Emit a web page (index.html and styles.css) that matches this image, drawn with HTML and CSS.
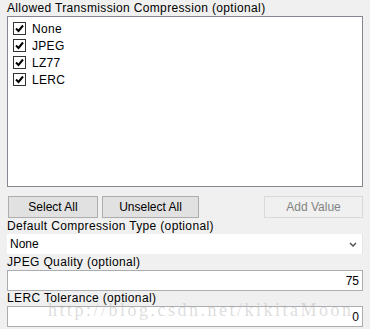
FILE: index.html
```html
<!DOCTYPE html>
<html>
<head>
    <title>Transmission Compression</title>
    <link rel="stylesheet" href="styles.css">
</head>
<body>
    <div class="panel">
        <div class="label">Allowed Transmission Compression (optional)</div>
        <div class="listbox">
            <div class="item"><span class="check"></span>None</div>
            <div class="item"><span class="check"></span>JPEG</div>
            <div class="item"><span class="check"></span>LZ77</div>
            <div class="item"><span class="check"></span>LERC</div>
        </div>

        <div class="buttons">
            <button class="btn">Select All</button>
            <button class="btn btn-wide">Unselect All</button>
            <button class="btn btn-add" disabled>Add Value</button>
        </div>

        <div class="label">Default Compression Type (optional)</div>
        <div class="combo">
            <span>None</span>
            <svg class="arrow" width="8" height="5" viewBox="0 0 8 5"><path d="M1 1 L4 4 L7 1" fill="none" stroke="#555" stroke-width="1.5"/></svg>
        </div>

        <div class="label">JPEG Quality (optional)</div>
        <div class="textbox">75</div>

        <div class="label label-last">LERC Tolerance (optional)</div>
        <div class="textbox">0</div>

        <div class="watermark">http://blog.csdn.net/kikitaMoon</div>
    </div>
</body>
</html>
```

FILE: styles.css
```css
body {
    margin: 0;
    background-color: #f0f0f0;
    font-family: "Liberation Sans", Arial, sans-serif;
    font-size: 12px;
    color: #000;
}

.panel {
    position: relative;
    padding: 2px 8px 0 7px;
    width: 356px;
    height: 327px;
    overflow: hidden;
}

.label {
    height: 12px;
    line-height: 12px;
    margin-bottom: 2px;
    letter-spacing: 0.35px;
}

.label-last {
    margin-top: 1px;
}

.listbox {
    height: 166px;
    background-color: #fff;
    border: 1px solid #828790;
    padding-top: 3px;
}

.item {
    display: flex;
    align-items: center;
    height: 17px;
    padding-left: 5px;
    letter-spacing: 0.3px;
}

.check {
    width: 11px;
    height: 11px;
    border: 1px solid #333;
    margin-right: 6px;
    background: #fff url("data:image/svg+xml,%3Csvg xmlns='http://www.w3.org/2000/svg' width='11' height='11'%3E%3Cpath d='M2 5.5 L4.5 8 L9 2.5' fill='none' stroke='%23000' stroke-width='2'/%3E%3C/svg%3E") no-repeat center;
}

.buttons {
    display: flex;
    margin: 9px 0 2px 1px;
}

.btn {
    font-family: "Liberation Sans", Arial, sans-serif;
    font-size: 12px;
    height: 22px;
    width: 90px;
    margin-right: 4px;
    background-color: #e1e1e1;
    border: 1px solid #adadad;
    padding: 0;
    color: #000;
}

.btn-wide {
    width: 97px;
}

.btn-add {
    margin-left: auto;
    margin-right: 0;
    width: 99px;
    background-color: #f0f0f0;
    border-color: #d9d9d9;
    color: #838383;
}

.combo {
    display: flex;
    align-items: center;
    justify-content: space-between;
    height: 20px;
    background-color: #fff;
    border-right: 1px solid #e6e6e6;
    padding: 0 5px 0 3px;
    margin-bottom: 2px;
}

.textbox {
    height: 19px;
    line-height: 20px;
    background-color: #fff;
    border: 1px solid #abadb3;
    text-align: right;
    padding-right: 3px;
}

.watermark {
    position: absolute;
    left: 48px;
    top: 300px;
    font-family: "Liberation Serif", serif;
    font-size: 18px;
    letter-spacing: 2.5px;
    color: rgba(180, 180, 180, 0.45);
    pointer-events: none;
    white-space: nowrap;
}
```
